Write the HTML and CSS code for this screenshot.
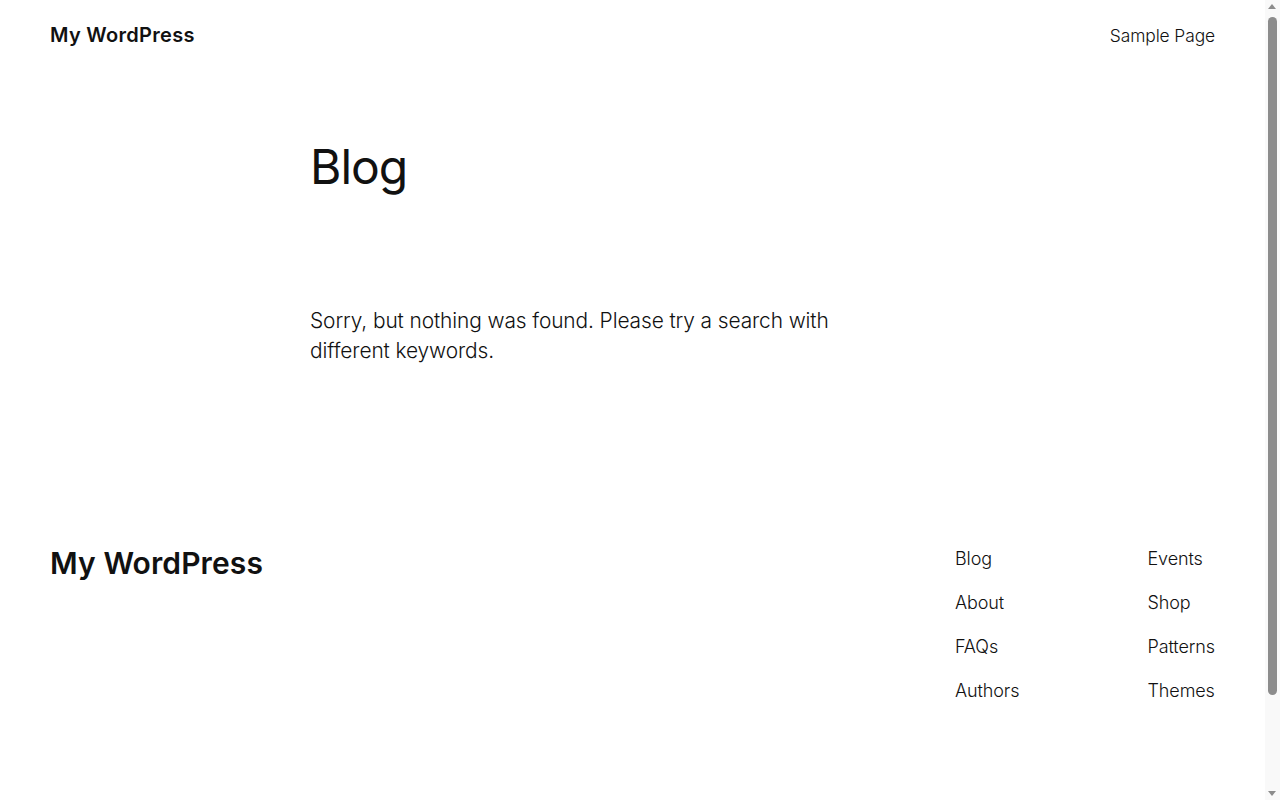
FILE: index.html
```html
<!DOCTYPE html>
<html lang="en">
<head>
<meta charset="utf-8">
<title>Blog – My WordPress</title>
<link rel="stylesheet" href="styles.css">
</head>
<body>
<div class="page">
  <header class="site-header">
    <a class="site-title" href="#">My WordPress</a>
    <nav class="main-nav"><a href="#">Sample Page</a></nav>
  </header>
  <main class="site-main">
    <h1 class="page-title">Blog</h1>
    <p class="no-results">Sorry, but nothing was found. Please try a search with different keywords.</p>
  </main>
  <footer class="site-footer">
    <div class="footer-top">
      <a class="footer-title" href="#">My WordPress</a>
      <div class="footer-navs">
        <ul class="footer-nav">
          <li><a href="#">Blog</a></li>
          <li><a href="#">About</a></li>
          <li><a href="#">FAQs</a></li>
          <li><a href="#">Authors</a></li>
        </ul>
        <ul class="footer-nav">
          <li><a href="#">Events</a></li>
          <li><a href="#">Shop</a></li>
          <li><a href="#">Patterns</a></li>
          <li><a href="#">Themes</a></li>
        </ul>
      </div>
    </div>
  </footer>
</div>
<div class="scrollbar" aria-hidden="true">
  <span class="sb-arrow sb-up"></span>
  <span class="sb-thumb"></span>
  <span class="sb-arrow sb-down"></span>
</div>
</body>
</html>
```
FILE: styles.css
```css
* { box-sizing: border-box; }
html, body { margin: 0; padding: 0; }
body {
  font-family: Inter, "Noto Sans", sans-serif;
  color: #111111;
  background: #ffffff;
  letter-spacing: -0.1px;
}
a { color: inherit; text-decoration: none; }

.page {
  margin-right: 15px;
}

.site-header {
  display: flex;
  justify-content: space-between;
  align-items: center;
  height: 70px;
  padding: 0 50px;
}
.site-title {
  font-size: 20px;
  font-weight: 600;
  letter-spacing: 0.3px;
}
.main-nav a {
  font-size: 17.4px;
  font-weight: 300;
}

.site-main {
  width: 645px;
  margin: 0 auto;
}
.page-title {
  margin: 68px 0 0;
  font-size: 48px;
  font-weight: 400;
  line-height: 1.2;
  letter-spacing: -1px;
}
.no-results {
  margin: 110px 0 0;
  max-width: 560px;
  font-size: 20.9px;
  font-weight: 300;
  line-height: 30px;
}

.site-footer {
  padding: 0 50px 80px;
  margin-top: 179px;
}
.footer-top {
  display: flex;
  justify-content: space-between;
  align-items: flex-start;
}
.footer-title {
  font-size: 30px;
  font-weight: 600;
  letter-spacing: 0.1px;
  line-height: 1.2;
}
.footer-navs {
  display: flex;
  justify-content: space-between;
  width: 260px;
}
.footer-nav {
  list-style: none;
  margin: 0;
  padding: 0;
  display: flex;
  flex-direction: column;
  gap: 17.3px;
}
.footer-nav li {
  font-size: 18px;
  line-height: 27px;
}
.footer-nav a {
  font-weight: 300;
}

/* simulated browser scrollbar overlaying the right edge */
.scrollbar {
  position: fixed;
  top: 0;
  right: 0;
  width: 15px;
  height: 100vh;
  background: #f9f9f9;
}
.sb-thumb {
  position: absolute;
  left: 3px;
  top: 17px;
  width: 9px;
  height: 678px;
  border-radius: 5px;
  background: #8c8c8c;
}
.sb-arrow {
  position: absolute;
  left: 3px;
  width: 0;
  height: 0;
  border-left: 4.5px solid transparent;
  border-right: 4.5px solid transparent;
}
.sb-up {
  top: 4px;
  border-bottom: 5px solid #8c8c8c;
}
.sb-down {
  bottom: 4px;
  border-top: 5px solid #8c8c8c;
}
```
